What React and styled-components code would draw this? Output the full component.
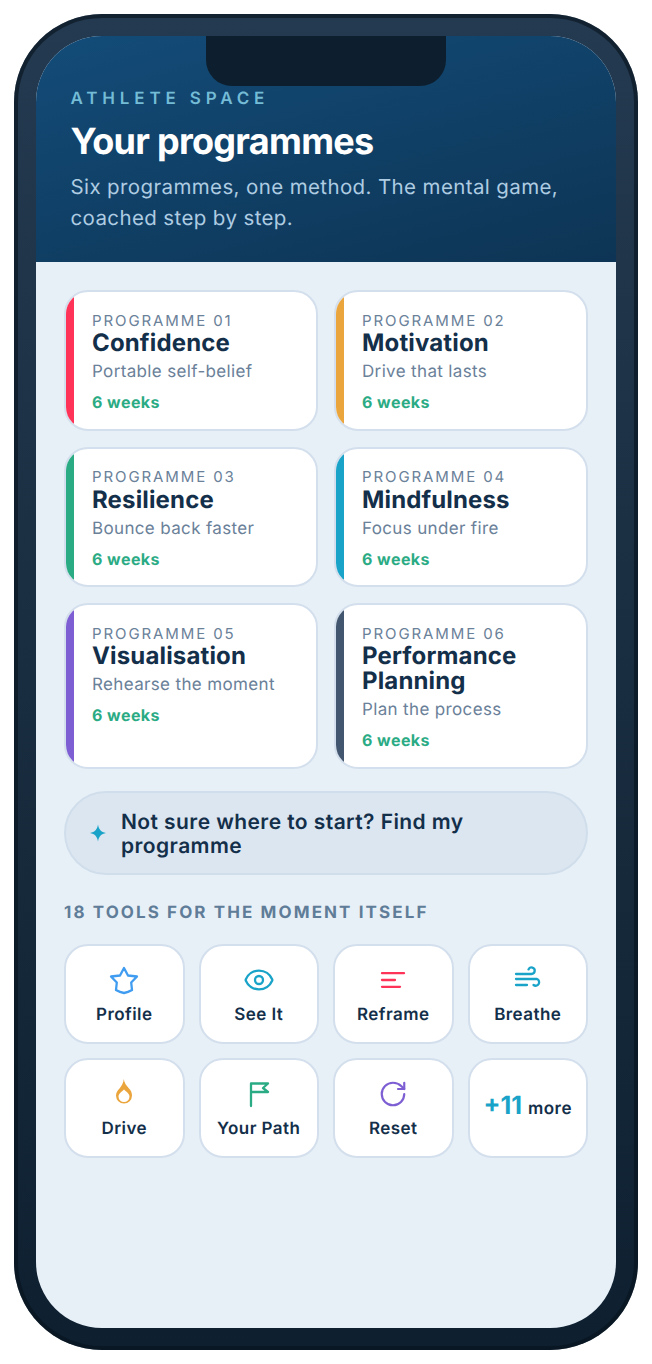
import styled, { createGlobalStyle } from 'styled-components';
import { Eye, RotateCw } from 'lucide-react';

const GlobalStyle = createGlobalStyle`
  html, body {
    margin: 0;
    padding: 0;
    background: #fff;
    font-family: Inter, "Noto Sans", sans-serif;
    text-rendering: geometricPrecision;
  }
  * { box-sizing: border-box; }
`;

const Page = styled.div`
  width: 652px;
  height: 1364px;
  padding: 14px;
`;

const Phone = styled.div`
  width: 624px;
  height: 1336px;
  padding: 22px;
  border-radius: 88px;
  background: linear-gradient(180deg, #243a50 0%, #0e2030 100%);
  box-shadow: inset 0 0 0 4px rgba(6, 18, 28, 0.6);
`;

const Screen = styled.div`
  position: relative;
  height: 1292px;
  border-radius: 66px;
  overflow: hidden;
  background: #e8f0f7;
`;

const Notch = styled.div`
  position: absolute;
  top: 0;
  left: 170px;
  width: 240px;
  height: 50px;
  background: #0d1f2e;
  border-radius: 0 0 26px 26px;
`;

const Header = styled.header`
  height: 226px;
  padding: 54px 34.5px 0;
  background: linear-gradient(165deg, #134c79 0%, #0d3454 100%);
`;

const Eyebrow = styled.div`
  font-size: 17px;
  line-height: 19px;
  font-weight: 600;
  letter-spacing: 4.85px;
  color: #74bcd6;
`;

const Heading = styled.h1`
  margin: 10px 0 0;
  font-size: 36px;
  line-height: 44px;
  font-weight: 700;
  letter-spacing: -0.72px;
  color: #fff;
`;

const Intro = styled.p`
  margin: 9px 0 0;
  font-size: 20.5px;
  line-height: 30.5px;
  letter-spacing: 0.38px;
  color: #aecce2;
`;

const Body = styled.main`
  padding: 28px 28px 0;
`;

const CardGrid = styled.div`
  display: grid;
  grid-template-columns: 254px 254px;
  column-gap: 16px;
  row-gap: 16px;
`;

const Card = styled.article`
  display: flex;
  background: #fff;
  border: 2px solid #d3dfec;
  border-radius: 24px;
  overflow: hidden;
`;

const Stripe = styled.div`
  flex: 0 0 8px;
  background: ${(p) => p.$color};
`;

const CardBody = styled.div`
  padding: 18.5px 16px 14.6px 18px;
`;

const CardNumber = styled.div`
  font-size: 15px;
  line-height: 19.5px;
  letter-spacing: 1.9px;
  color: #6a8199;
`;

const CardTitle = styled.h2`
  margin: 0;
  font-size: 24px;
  line-height: 25px;
  font-weight: 700;
  letter-spacing: 0.15px;
  color: #132f4a;
`;

const CardSub = styled.div`
  margin-top: 5px;
  font-size: 17px;
  line-height: 24px;
  letter-spacing: 0.35px;
  color: #6a8199;
`;

const Duration = styled.div`
  margin-top: 6px;
  font-size: 16px;
  line-height: 24px;
  font-weight: 700;
  letter-spacing: 0.45px;
  color: #2bab84;
`;

const Finder = styled.button`
  display: flex;
  align-items: center;
  gap: 14px;
  width: 524px;
  height: 84px;
  margin-top: 22px;
  padding: 0 24px 0 23px;
  background: #dce6f1;
  border: 2px solid #d0deeb;
  border-radius: 42px;
  text-align: left;
  font-family: inherit;
  text-rendering: inherit;
  font-size: 21px;
  line-height: 24px;
  font-weight: 600;
  letter-spacing: 0.42px;
  color: #132f4a;
`;

const FinderText = styled.span`
  padding-top: 4px;
`;

const SectionLabel = styled.h3`
  margin: 27px 0 0;
  font-size: 17px;
  line-height: 22px;
  font-weight: 700;
  letter-spacing: 2.1px;
  color: #5f7d98;
`;

const ToolGrid = styled.div`
  display: grid;
  grid-template-columns: repeat(4, 1fr);
  gap: 14px;
  margin-top: 20px;
`;

const Tool = styled.div`
  display: flex;
  flex-direction: column;
  align-items: center;
  justify-content: center;
  gap: 9px;
  height: 100px;
  padding-top: 5px;
  background: #fff;
  border: 2px solid #d3dfec;
  border-radius: 24px;
`;

const IconSlot = styled.div`
  display: flex;
  align-items: center;
  justify-content: center;
  width: 28px;
  height: 28px;

  svg {
    flex: none;
  }
`;

const ToolIcon = styled.svg`
  display: block;
  width: 28px;
  height: 28px;
  overflow: visible;
  fill: ${(p) => (p.$solid ? p.$color : 'none')};
  fill-rule: evenodd;
  stroke: ${(p) => (p.$solid ? 'none' : p.$color)};
  stroke-width: 2.3;
  stroke-linecap: round;
  stroke-linejoin: round;
`;

const ToolName = styled.span`
  font-size: 17px;
  line-height: 24px;
  font-weight: 600;
  letter-spacing: 0.45px;
  color: #132f4a;
`;

const MoreTool = styled(Tool)`
  flex-direction: row;
  align-items: baseline;
  padding-top: 34px;
  gap: 6px;
`;

const MoreCount = styled.span`
  font-size: 25px;
  line-height: 24px;
  font-weight: 700;
  color: #1aa3c8;
`;

const MoreText = styled(ToolName)``;

const programmes = [
  { n: '01', title: 'Confidence', sub: 'Portable self-belief', color: '#ff3358' },
  { n: '02', title: 'Motivation', sub: 'Drive that lasts', color: '#eba53d' },
  { n: '03', title: 'Resilience', sub: 'Bounce back faster', color: '#2bab84' },
  { n: '04', title: 'Mindfulness', sub: 'Focus under fire', color: '#1aa3c8' },
  { n: '05', title: 'Visualisation', sub: 'Rehearse the moment', color: '#7d5fd3' },
  { n: '06', title: 'Performance Planning', sub: 'Plan the process', color: '#43566f' },
];

const Sparkle = () => (
  <svg width="18" height="18" viewBox="0 0 18 18" style={{ flex: 'none' }}>
    <path d="M9 0.5C9.8 5.5 12 8 17 9C12 10 9.8 12.5 9 17.5C8.2 12.5 6 10 1 9C6 8 8.2 5.5 9 0.5Z" fill="#1aa3c8" />
  </svg>
);

const tools = [
  { name: 'Profile', color: '#3f9cf0', icon: <path d="M14 2L18 9.5L27 10.5L21.2 16.5L22 24C19.5 25.5 17 26.5 14 27C11 26.5 8.5 25.5 6 24L6.8 16.5L1 10.5L10 9.5Z" /> },
  { name: 'See It', color: '#1aa3c8', lucide: Eye, size: 32 },
  { name: 'Reframe', color: '#ff3358', icon: <path d="M3 7.2H25M3 14H16M3 20.8H21" /> },
  { name: 'Breathe', color: '#1aa3c8', icon: <path d="M2 8H17.5A3.25 3.25 0 1 0 14.5 3.4M2 13H23A3.5 3.5 0 1 1 19.5 19M2 19H13" /> },
  { name: 'Drive', color: '#eba53d', solid: true, icon: <path d="M13.8 -1C14.2 3 16.5 5.5 19 8.5C21 10.5 22 13 22 15.5A8 8 0 0 1 6 15.5C6 12.5 7.5 10.5 9.5 8.5C11.5 6 13.5 3 13.8 -1ZM14 9.5C13 11 8.5 13 8.5 16.5A5.5 5.5 0 0 0 19.5 16.5C19.5 13 15 11 14 9.5Z" /> },
  { name: 'Your Path', color: '#2bab84', icon: <path d="M6 26V3.5H23L18 8L23 12H6" /> },
  { name: 'Reset', color: '#7d5fd3', lucide: RotateCw, size: 30 },
];

const App = () => {
  return (
    <Page>
      <GlobalStyle />
      <Phone>
        <Screen>
          <Notch />
          <Header>
            <Eyebrow>ATHLETE SPACE</Eyebrow>
            <Heading>Your programmes</Heading>
            <Intro>Six programmes, one method. The mental game, coached step by step.</Intro>
          </Header>
          <Body>
            <CardGrid>
              {programmes.map((p) => (
                <Card key={p.n}>
                  <Stripe $color={p.color} />
                  <CardBody>
                    <CardNumber>PROGRAMME {p.n}</CardNumber>
                    <CardTitle>{p.title}</CardTitle>
                    <CardSub>{p.sub}</CardSub>
                    <Duration>6 weeks</Duration>
                  </CardBody>
                </Card>
              ))}
            </CardGrid>
            <Finder>
              <Sparkle />
              <FinderText>Not sure where to start? Find my programme</FinderText>
            </Finder>
            <SectionLabel>18 TOOLS FOR THE MOMENT ITSELF</SectionLabel>
            <ToolGrid>
              {tools.map((t) => (
                <Tool key={t.name}>
                  <IconSlot>
                    {t.lucide ? (
                      <t.lucide size={t.size} color={t.color} strokeWidth={1.75} />
                    ) : (
                      <ToolIcon viewBox="0 0 28 28" $color={t.color} $solid={t.solid}>{t.icon}</ToolIcon>
                    )}
                  </IconSlot>
                  <ToolName>{t.name}</ToolName>
                </Tool>
              ))}
              <MoreTool>
                <MoreCount>+11</MoreCount>
                <MoreText>more</MoreText>
              </MoreTool>
            </ToolGrid>
          </Body>
        </Screen>
      </Phone>
    </Page>
  );
};

export default App;
